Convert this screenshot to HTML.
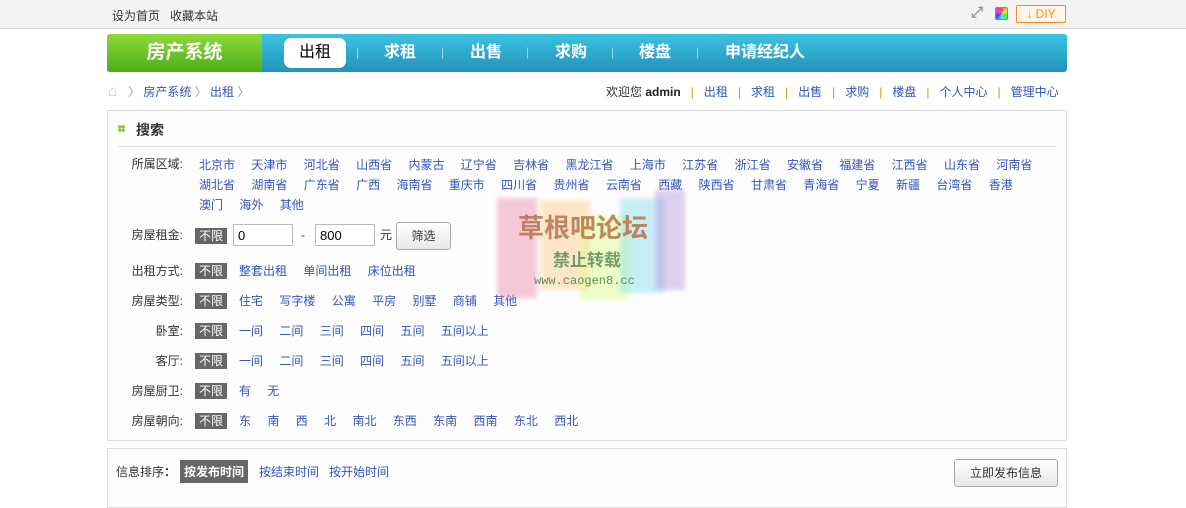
<!DOCTYPE html>
<html><head><meta charset="utf-8"><style>
*{margin:0;padding:0;box-sizing:border-box}
body{width:1186px;height:495px;overflow:hidden;background:#fff;font-family:"Liberation Sans","Noto Sans CJK SC",sans-serif;font-size:12px;color:#333;position:relative}
.a{position:absolute;white-space:nowrap}
a{color:#3355bb;text-decoration:none}
.top{left:0;top:0;width:1186px;height:29px;background:#f3f3f3;border-bottom:1px solid #d8d8d8}
.nav{left:107px;top:34px;width:960px;height:38px;background:linear-gradient(#3cc3e3,#2292b8);border-radius:3px}
.logo{left:107px;top:34px;width:155px;height:38px;background:linear-gradient(#8edb3a,#4aad18);border-radius:3px 0 0 3px;color:#fff;font-size:19px;font-weight:bold;text-align:center;line-height:38px}
.ni{color:#fff;font-size:16px;font-weight:bold;top:34px;line-height:38px}
.sep{color:#9fd9ea;top:45px;font-size:12px}
.box{border:1px solid #ddd;background:#fdfdfd}
.lb{width:80px;text-align:right}
.nx{display:inline-block;background:#666;color:#fff;width:32px;height:16px;text-align:center;font-size:12px;line-height:16px}
.row a{margin-right:13px}
input{position:absolute;height:22px;border:1px solid #bbb;font-size:13px;padding-left:4px;font-family:"Liberation Sans",sans-serif;background:#fff}
.btn{border:1px solid #aaa;border-radius:3px;background:linear-gradient(#fff,#e8e8e8);text-align:center}
.wm{position:absolute;filter:blur(2px);opacity:.45}
.s{color:#c90;margin:0 10px}
</style></head><body>
<div class="a top"></div>
<div class="a" style="left:112px;top:7px;color:#333">设为首页&nbsp;&nbsp;&nbsp;收藏本站</div>
<div class="a" style="left:971px;top:6px;width:14px;height:14px;color:#999;font-size:15px;line-height:14px;font-weight:bold">⤢</div>
<div class="a" style="left:995px;top:7px;width:13px;height:13px;border:1px solid #888;border-radius:2px;background:conic-gradient(#e44,#ee4,#4e4,#4ee,#44e,#e4e,#e44)"></div>
<div class="a" style="left:1016px;top:5px;width:50px;height:18px;border:1px solid #f08a24;border-radius:2px;background:#fff6e8;color:#f08a24;font-size:12px;line-height:16px;text-align:center">↓ DIY</div>
<div class="a nav"></div>
<div class="a logo">房产系统</div>
<div class="a" style="left:284px;top:38px;width:62px;height:30px;background:#fff;border-radius:7px;color:#000;font-size:16px;text-align:center;line-height:30px">出租</div>
<div class="a sep" style="left:356px">|</div>
<div class="a ni" style="left:384px">求租</div>
<div class="a sep" style="left:441px">|</div>
<div class="a ni" style="left:470px">出售</div>
<div class="a sep" style="left:526px">|</div>
<div class="a ni" style="left:555px">求购</div>
<div class="a sep" style="left:611px">|</div>
<div class="a ni" style="left:639px">楼盘</div>
<div class="a sep" style="left:696px">|</div>
<div class="a ni" style="left:725px">申请经纪人</div>
<div class="a" style="left:108px;top:83px;color:#b8cad8;font-size:15px">⌂</div>
<div class="a" style="left:128px;top:83px;color:#999">〉 <a>房产系统</a> 〉 <a>出租</a> 〉</div>
<div class="a" style="left:606px;top:83px">欢迎您 <b style="color:#222">admin</b><span class="s">|</span><a>出租</a><span class="s">|</span><a>求租</a><span class="s">|</span><a>出售</a><span class="s">|</span><a>求购</a><span class="s">|</span><a>楼盘</a><span class="s">|</span><a>个人中心</a><span class="s">|</span><a>管理中心</a></div>
<div class="a box" style="left:107px;top:110px;width:960px;height:331px"></div>
<div class="a" style="left:118px;top:125px;width:7px;height:7px;background:radial-gradient(circle,#8c3 1.5px,transparent 2px) 0 0/3.5px 3.5px"></div>
<div class="a" style="left:136px;top:120px;font-size:14px;font-weight:bold;color:#333">搜索</div>
<div class="a" style="left:118px;top:146px;width:938px;height:1px;background:#e2e2e2"></div>

<div class="a lb" style="left:103px;top:155px">所属区域:</div>
<div class="a row" style="left:199px;top:155px;line-height:20px;width:860px;white-space:normal">
<a>北京市</a> <a>天津市</a> <a>河北省</a> <a>山西省</a> <a>内蒙古</a> <a>辽宁省</a> <a>吉林省</a> <a>黑龙江省</a> <a>上海市</a> <a>江苏省</a> <a>浙江省</a> <a>安徽省</a> <a>福建省</a> <a>江西省</a> <a>山东省</a> <a>河南省</a><br><a>湖北省</a> <a>湖南省</a> <a>广东省</a> <a>广西</a> <a>海南省</a> <a>重庆市</a> <a>四川省</a> <a>贵州省</a> <a>云南省</a> <a>西藏</a> <a>陕西省</a> <a>甘肃省</a> <a>青海省</a> <a>宁夏</a> <a>新疆</a> <a>台湾省</a> <a>香港</a><br><a>澳门</a> <a>海外</a> <a>其他</a></div>

<div class="a lb" style="left:103px;top:226px">房屋租金:</div>
<div class="a nx" style="left:195px;top:228px">不限</div>
<input style="left:233px;top:224px;width:60px" value="0">
<div class="a" style="left:301px;top:228px">-</div>
<input style="left:315px;top:224px;width:60px" value="800">
<div class="a" style="left:380px;top:226px">元</div>
<div class="a btn" style="left:396px;top:222px;width:55px;height:28px;line-height:26px">筛选</div>

<div class="a lb" style="left:103px;top:262px">出租方式:</div>
<div class="a row" style="left:195px;top:262px"><span class="nx" style="margin-right:12px">不限</span><a>整套出租</a> <a>单间出租</a> <a>床位出租</a></div>
<div class="a lb" style="left:103px;top:292px">房屋类型:</div>
<div class="a row" style="left:195px;top:292px"><span class="nx" style="margin-right:12px">不限</span><a>住宅</a> <a>写字楼</a> <a>公寓</a> <a>平房</a> <a>别墅</a> <a>商铺</a> <a>其他</a></div>
<div class="a lb" style="left:103px;top:322px">卧室:</div>
<div class="a row" style="left:195px;top:322px"><span class="nx" style="margin-right:12px">不限</span><a>一间</a> <a>二间</a> <a>三间</a> <a>四间</a> <a>五间</a> <a>五间以上</a></div>
<div class="a lb" style="left:103px;top:352px">客厅:</div>
<div class="a row" style="left:195px;top:352px"><span class="nx" style="margin-right:12px">不限</span><a>一间</a> <a>二间</a> <a>三间</a> <a>四间</a> <a>五间</a> <a>五间以上</a></div>
<div class="a lb" style="left:103px;top:382px">房屋厨卫:</div>
<div class="a row" style="left:195px;top:382px"><span class="nx" style="margin-right:12px">不限</span><a>有</a> <a>无</a></div>
<div class="a lb" style="left:103px;top:412px">房屋朝向:</div>
<div class="a row" style="left:195px;top:412px"><span class="nx" style="margin-right:12px">不限</span><a>东</a> <a>南</a> <a>西</a> <a>北</a> <a>南北</a> <a>东西</a> <a>东南</a> <a>西南</a> <a>东北</a> <a>西北</a></div>

<div class="wm" style="left:497px;top:198px;width:40px;height:100px;background:#e8a"></div>
<div class="wm" style="left:540px;top:200px;width:50px;height:90px;background:#fc8"></div>
<div class="wm" style="left:580px;top:215px;width:50px;height:85px;background:#df8"></div>
<div class="wm" style="left:620px;top:198px;width:45px;height:95px;background:#8de"></div>
<div class="wm" style="left:655px;top:190px;width:30px;height:100px;background:#b9d"></div>
<div class="a" style="left:518px;top:208px;font-size:26px;font-weight:bold;color:#b7734e;opacity:.85">草根吧论坛</div>
<div class="a" style="left:553px;top:246px;font-size:17px;font-weight:bold;color:#5d8d5d;opacity:.85">禁止转载</div>
<div class="a" style="left:534px;top:274px;font-size:12px;color:#5d8d5d;font-family:'Liberation Mono',monospace">www.caogen8.cc</div>

<div class="a box" style="left:107px;top:448px;width:960px;height:60px"></div>
<div class="a" style="left:116px;top:463px">信息排序<b>：</b></div>
<div class="a" style="left:180px;top:460px;background:#666;color:#fff;padding:3px 4px;font-weight:bold">按发布时间</div>
<div class="a" style="left:259px;top:463px"><a>按结束时间</a>&nbsp;&nbsp;&nbsp;<a>按开始时间</a></div>
<div class="a btn" style="left:954px;top:459px;width:104px;height:28px;line-height:26px">立即发布信息</div>
</body></html>
